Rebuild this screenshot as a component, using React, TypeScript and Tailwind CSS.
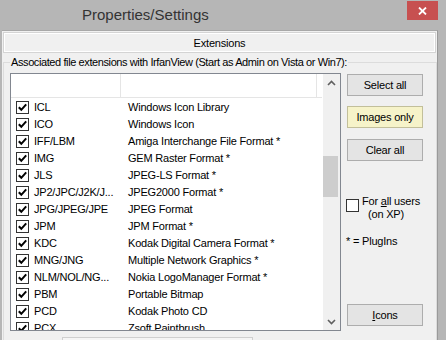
import React from "react";

const rows: [string, string][] = [
  ["ICL", "Windows Icon Library"],
  ["ICO", "Windows Icon"],
  ["IFF/LBM", "Amiga Interchange File Format *"],
  ["IMG", "GEM Raster Format *"],
  ["JLS", "JPEG-LS Format *"],
  ["JP2/JPC/J2K/J...", "JPEG2000 Format *"],
  ["JPG/JPEG/JPE", "JPEG Format"],
  ["JPM", "JPM Format *"],
  ["KDC", "Kodak Digital Camera Format *"],
  ["MNG/JNG", "Multiple Network Graphics *"],
  ["NLM/NOL/NG...", "Nokia LogoManager Format *"],
  ["PBM", "Portable Bitmap"],
  ["PCD", "Kodak Photo CD"],
  ["PCX", "Zsoft Paintbrush"],
];

function Check() {
  return (
    <div className="w-[13px] h-[13px] border border-[#333333] bg-white flex-none">
      <svg width="11" height="11" viewBox="0 0 11 11">
        <polyline points="1.8,5.2 4.3,7.8 9.2,2.4" fill="none" stroke="#000" strokeWidth="2" />
      </svg>
    </div>
  );
}

function Btn({ children, yellow }: { children: React.ReactNode; yellow?: boolean }) {
  return (
    <div
      className={
        "w-[76px] h-[22px] flex items-center justify-center border text-black " +
        (yellow ? "bg-[#f6f3c9] border-[#c2bf9a]" : "bg-[#e4e4e4] border-[#adadad]")
      }
    >
      {children}
    </div>
  );
}

export default function App() {
  return (
    <div
      className="w-[446px] h-[340px] bg-[#b6b6b6] overflow-hidden flex flex-col text-[11px] tracking-[-0.2px] text-black"
      style={{ fontFamily: '"Liberation Sans", Arial, sans-serif' }}
    >
      {/* Title bar */}
      <div className="h-[30px] flex flex-none">
        <div className="ml-[82px] mt-[6px] text-[15px] tracking-normal leading-[18px] text-[#333333]">
          Properties/Settings
        </div>
        <div className="ml-auto mr-[8px] mt-[1px] w-[31px] h-[19px] bg-[#c75050] flex items-center justify-center">
          <svg width="9" height="8" viewBox="0 0 9 8">
            <path d="M1 0.5 L8 7.5 M8 0.5 L1 7.5" stroke="#fff" strokeWidth="1.8" />
          </svg>
        </div>
      </div>

      {/* Body */}
      <div className="flex-1 ml-[2px] mr-[8px] bg-[#f0f0f0] border-t border-[#a8a8a8] border-r border-r-[#9a9a9a] flex flex-col">
        {/* Tab header */}
        <div className="mx-[1px] mt-[1px] h-[21px] border border-[#d4d4d4] shadow-[inset_1px_1px_0_#ffffff,inset_-1px_-1px_0_#ffffff] flex items-center justify-center leading-[14px]">
          Extensions
        </div>

        {/* Group box */}
        <div className="ml-[1px] mt-[9px] border border-[#dcdcdc] flex-1 flex flex-col">
          <div className="-mt-[8px] ml-[6px] px-[1px] bg-[#f0f0f0] w-fit leading-[15px] tracking-[-0.4px]">
            Associated file extensions with IrfanView (Start as Admin on Vista or Win7):
          </div>

          <div className="flex mt-[3px] ml-[6px] items-start">
            {/* List */}
            <div className="w-[331px] h-[258px] border border-[#828790] bg-white flex overflow-hidden">
              <div className="w-[311px] flex flex-col">
                <div className="h-[24px] flex-none border-b border-[#e5e5e5] flex">
                  <div className="w-[110px] border-r border-[#e5e5e5]" />
                  <div className="w-[196px] border-r border-[#e5e5e5]" />
                </div>
                <div className="mt-[1px] flex flex-col">
                  {rows.map(([ext, name]) => (
                    <div key={ext} className="h-[17px] flex items-center flex-none">
                      <div className="w-[117px] flex items-center pl-[5px]">
                        <Check />
                        <span className="ml-[5px] leading-[17px] whitespace-nowrap">{ext}</span>
                      </div>
                      <span className="leading-[17px] whitespace-nowrap">{name}</span>
                    </div>
                  ))}
                </div>
              </div>
              {/* Scrollbar */}
              <div className="w-[17px] ml-[1px] bg-[#f0f0f0] flex flex-col">
                <div className="h-[17px] flex items-center justify-center">
                  <svg width="9" height="6" viewBox="0 0 9 6">
                    <path d="M1 5 L4.5 1.5 L8 5" fill="none" stroke="#606060" strokeWidth="1.6" />
                  </svg>
                </div>
                <div className="mt-[65px] h-[41px] w-[15px] bg-[#cdcdcd]" />
                <div className="mt-auto h-[17px] flex items-center justify-center">
                  <svg width="9" height="6" viewBox="0 0 9 6">
                    <path d="M1 1 L4.5 4.5 L8 1" fill="none" stroke="#606060" strokeWidth="1.6" />
                  </svg>
                </div>
              </div>
            </div>

            {/* Right panel */}
            <div className="ml-[6px] flex flex-col">
              <div className="mt-[1px]">
                <Btn>Select all</Btn>
              </div>
              <div className="mt-[10px]">
                <Btn yellow>Images only</Btn>
              </div>
              <div className="mt-[11px]">
                <Btn>Clear all</Btn>
              </div>
              <div className="mt-[34px] -ml-[1px] h-[26px] flex items-start">
                <div className="mt-[4px] w-[13px] h-[13px] border border-[#333333] bg-white flex-none" />
                <div className="ml-[3px] leading-[13px]">
                  <div>
                    For <span className="underline">a</span>ll users
                  </div>
                  <div className="pl-[6px]">(on XP)</div>
                </div>
              </div>
              <div className="mt-[13px] -ml-[1px] leading-[15px]">* = PlugIns</div>
              <div className="mt-[55px]">
                <Btn>
                  <span className="underline">I</span>cons
                </Btn>
              </div>
            </div>
          </div>

          <div className="ml-[58px] mt-[6px] w-[191px] h-[8px] border border-[#cfcfcf] bg-[#f5f5f5]" />
        </div>
      </div>
    </div>
  );
}
